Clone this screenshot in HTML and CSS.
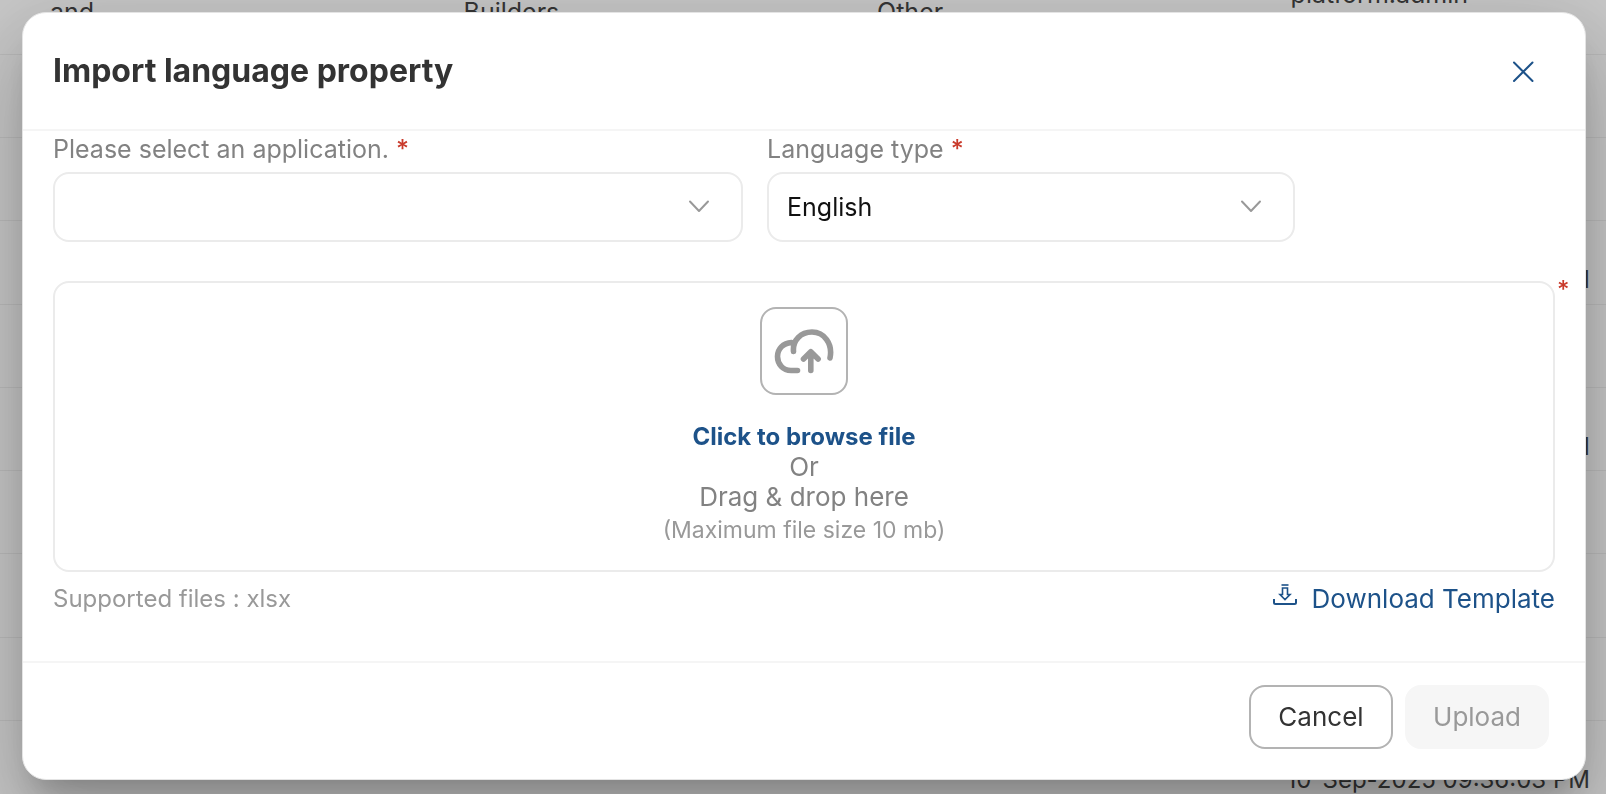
FILE: index.html
```html
<!DOCTYPE html>
<html lang="en">
<head>
<meta charset="utf-8">
<meta name="viewport" content="width=device-width, initial-scale=1">
<title>Import language property</title>
<link rel="stylesheet" href="styles.css">
</head>
<body>
<div class="page" aria-hidden="true">
  <table class="records">
    <tbody>
      <tr><td>and</td><td>Builders</td><td>Other</td><td>platform.admin<br>&nbsp;</td></tr>
      <tr><td colspan="4"></td></tr>
      <tr><td colspan="4"></td></tr>
      <tr><td></td><td></td><td></td><td class="date">&nbsp;<br>10-Sep-2025 09:36:03 PM</td></tr>
      <tr><td colspan="4"></td></tr>
      <tr><td></td><td></td><td></td><td class="date">&nbsp;<br>10-Sep-2025 09:36:03 PM</td></tr>
      <tr><td colspan="4"></td></tr>
      <tr><td colspan="4"></td></tr>
      <tr><td colspan="4"></td></tr>
      <tr><td></td><td></td><td></td><td class="date">&nbsp;<br>10-Sep-2025 09:36:03 PM</td></tr>
    </tbody>
  </table>
</div>

<div class="overlay">
  <form class="modal" role="dialog" aria-modal="true" aria-labelledby="modal-title">
    <header class="modal-header">
      <h1 class="modal-title" id="modal-title">Import language property</h1>
      <button class="close" type="button" aria-label="Close">
        <svg width="24" height="24" viewBox="0 0 24 24" fill="none" stroke="currentColor" stroke-width="2" stroke-linecap="round"><path d="M3 3.500l18.500 18.500M21.500 3.500L3 22"/></svg>
      </button>
    </header>

    <div class="modal-body">
      <div class="fields">
        <div class="field">
          <label class="label" for="application">Please select an application. <span class="required">*</span></label>
          <div class="select-wrap">
            <select class="select" id="application" required><option value=""></option></select>
            <svg class="chevron" width="24" height="24" viewBox="0 0 24 24" fill="none" stroke="currentColor" stroke-width="2" stroke-linecap="round" stroke-linejoin="round"><path d="M3 7.500L12 17l9-9.500"/></svg>
          </div>
        </div>
        <div class="field">
          <label class="label" for="language">Language type <span class="required">*</span></label>
          <div class="select-wrap">
            <select class="select" id="language" required><option>English</option></select>
            <svg class="chevron" width="24" height="24" viewBox="0 0 24 24" fill="none" stroke="currentColor" stroke-width="2" stroke-linecap="round" stroke-linejoin="round"><path d="M3 7.500L12 17l9-9.500"/></svg>
          </div>
        </div>
      </div>

      <div class="drop-row">
        <button class="dropzone" type="button">
          <span class="upload-icon">
            <svg width="60" height="46" viewBox="0 0 60 46" fill="none" stroke="currentColor" stroke-width="5.600" stroke-linecap="round" stroke-linejoin="round">
              <path d="M23.500 42.500H17C9 42.500 3.500 36 3.500 28.500S9 15 17.500 14.600"/>
              <path d="M19.500 23.500C18.500 12 27 4 38 4c12 0 21 11.500 18 26"/>
              <path d="M36.800 42.500V24M29.500 31l7.300-7.300 7.300 7.300"/>
            </svg>
          </span>
          <span class="browse">Click to browse file</span>
          <span class="hint">Or</span>
          <span class="hint">Drag &amp; drop here</span>
          <span class="limit">(Maximum file size 10 mb)</span>
        </button>
        <span class="required">*</span>
      </div>

      <div class="file-info">
        <span class="supported">Supported files : xlsx</span>
        <a class="download" href="#">
          <svg width="24" height="22" viewBox="0 0 24 22" fill="none" stroke="currentColor" stroke-width="1.600">
            <path d="M1 15v3.500q0 1.500 1.500 1.500h19q1.500 0 1.500-1.500V15" stroke-width="2"/>
            <path d="M8.500 1h7"/>
            <path d="M9.500 4h5v6.500h2.500L12 15.500 7 10.500h2.500z"/>
          </svg>
          <span>Download Template</span>
        </a>
      </div>
    </div>

    <footer class="modal-footer">
      <button class="btn btn-cancel" type="button">Cancel</button>
      <button class="btn btn-upload" type="submit" disabled>Upload</button>
    </footer>
  </form>
</div>
</body>
</html>
```

FILE: styles.css
```css
*,
*::before,
*::after {
  box-sizing: border-box;
}

body {
  margin: 0;
  font-family: Inter, "Open Sans", sans-serif;
  font-size: 24px;
  line-height: 30px;
  color: #333;
  background: #fff;
}

button,
select {
  font: inherit;
  color: inherit;
}

.page {
  height: 100vh;
  overflow: hidden;
}

.records {
  width: 103%;
  margin-top: -29px;
  table-layout: fixed;
  border-collapse: collapse;
  font-size: 25px;
  line-height: 36px;
  color: #444;
}

.records tr {
  height: 83px;
}

.records tr:nth-child(4n) {
  height: 84px;
}

.records td {
  padding: 5px 0 5px 50px;
  border-bottom: 1px solid #f0f0f0;
  white-space: nowrap;
}

.records .date {
  padding-left: 46px;
  font-size: 24px;
}

.overlay {
  position: fixed;
  inset: 0;
  display: flex;
  align-items: flex-start;
  padding: 12px 20px 12px 22px;
  overflow: hidden;
  background: rgba(0, 0, 0, 0.22);
}

.modal {
  flex: 1;
  border: 1px solid #e4e4e4;
  border-radius: 24px;
  background: #fff;
  box-shadow:
    0 22px 30px -14px rgba(0, 0, 0, 0.2),
    0 48px 76px 6px rgba(0, 0, 0, 0.14),
    0 18px 92px 16px rgba(0, 0, 0, 0.12);
}

.modal-header {
  display: flex;
  align-items: center;
  justify-content: space-between;
  padding: 34px 50px 34px 30px;
  border-bottom: 2px solid #f5f5f5;
}

.modal-title {
  margin: 0;
  font-size: 32px;
  line-height: 48px;
  font-weight: 700;
}

.close {
  display: flex;
  padding: 0;
  border: 0;
  background: none;
  color: #1d5289;
}

.modal-body {
  padding: 3px 30px 47px;
}

.fields {
  display: grid;
  grid-template-columns: 690fr 528fr 236fr;
  gap: 24px;
}

.label {
  display: block;
  height: 30px;
  margin-bottom: 8px;
  font-size: 25px;
  color: #828282;
}

.required {
  color: #c93a2b;
}

.label .required {
  font-weight: 500;
}

.select-wrap {
  position: relative;
}

.select {
  display: block;
  width: 100%;
  height: 70px;
  padding: 0 64px 0 18px;
  border: 2px solid #ebebeb;
  border-radius: 16px;
  appearance: none;
  background: #fff;
  font-size: 25px;
  color: #111;
}

.chevron {
  position: absolute;
  top: 22px;
  right: 32px;
  color: #999;
  pointer-events: none;
}

.drop-row {
  display: flex;
  gap: 2px;
  margin-top: 39px;
  margin-right: -14px;
}

.drop-row .required {
  width: 12px;
  font-weight: 500;
  line-height: 18px;
}

.dropzone {
  flex: 1;
  display: flex;
  flex-direction: column;
  align-items: center;
  padding: 24px 16px 25px;
  border: 2px solid #ebebeb;
  border-radius: 16px;
  background: #fff;
}

.upload-icon {
  display: flex;
  align-items: center;
  justify-content: center;
  width: 88px;
  height: 88px;
  margin-bottom: 27px;
  border: 2px solid #b3b3b3;
  border-radius: 16px;
  color: #999;
}

.browse {
  font-weight: 700;
  color: #1d5289;
}

.hint {
  font-size: 26px;
  color: #828282;
}

.limit {
  padding-top: 3px;
  font-size: 23px;
  color: #999;
}

.file-info {
  display: flex;
  align-items: center;
  justify-content: space-between;
  padding-top: 12px;
}

.supported {
  color: #999;
}

.download {
  display: flex;
  align-items: flex-start;
  gap: 15px;
  font-size: 26px;
  color: #1d5289;
  text-decoration: none;
}

.modal-footer {
  display: flex;
  justify-content: flex-end;
  gap: 12px;
  padding: 22px 36px 30px;
  border-top: 2px solid #f5f5f5;
}

.btn {
  width: 144px;
  height: 64px;
  padding: 0;
  border: 2px solid #b3b3b3;
  border-radius: 16px;
  background: #fff;
  font-size: 26px;
}

.btn-upload {
  border-color: #f6f6f6;
  background: #f6f6f6;
  color: #999;
}
```
